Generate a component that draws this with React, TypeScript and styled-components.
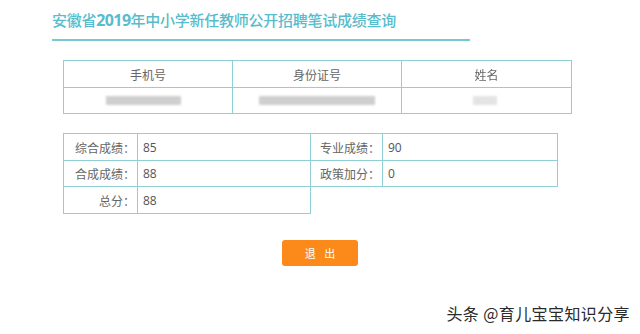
import styled, { createGlobalStyle } from 'styled-components';

const GlobalStyle = createGlobalStyle`
  html, body {
    margin: 0;
    padding: 0;
    background: #ffffff;
  }
  body {
    font-family: "Noto Sans CJK SC", "Noto Sans", sans-serif;
  }
`;

const BORDER = '#8fd0d6';

const scores = [
  { label: '综合成绩：', value: '85' },
  { label: '合成成绩：', value: '88' },
  { label: '总分：', value: '88' },
];

const extraScores = [
  { label: '专业成绩：', value: '90' },
  { label: '政策加分：', value: '0' },
];

const App = () => {
  return (
    <Page>
      <GlobalStyle />
      <Title>
        安徽省<Year>2019</Year>年中小学新任教师公开招聘笔试成绩查询
      </Title>
      <TitleLine />

      <Content>
        <InfoGrid>
          <HeadCell>手机号</HeadCell>
          <HeadCell>身份证号</HeadCell>
          <HeadCell $blur>姓名</HeadCell>
          <DataCell>
            <Masked $w={75} $shift={-10} />
          </DataCell>
          <DataCell>
            <Masked $w={116} $shift={0} />
          </DataCell>
          <DataCell>
            <Masked $w={24} $shift={-4} $light />
          </DataCell>
        </InfoGrid>

        <ScoreRow>
          <ScoreGrid $rows={3} $cols="73px 172px">
            {scores.map((s) => (
              <ScorePair key={s.label} label={s.label} value={s.value} />
            ))}
          </ScoreGrid>
          <ScoreGrid $rows={2} $cols="71px 174px" $joined>
            {extraScores.map((s) => (
              <ScorePair key={s.label} label={s.label} value={s.value} />
            ))}
          </ScoreGrid>
        </ScoreRow>

        <ButtonRow>
          <ExitButton>退 出</ExitButton>
        </ButtonRow>
      </Content>

      <Watermark>头条 @育儿宝宝知识分享</Watermark>
    </Page>
  );
};

const ScorePair = ({ label, value }: { label: string; value: string }) => (
  <>
    <LabelCell>{label}</LabelCell>
    <ValueCell>{value}</ValueCell>
  </>
);

export default App;

const Page = styled.main`
  position: relative;
  width: 640px;
  height: 334px;
  overflow: hidden;
  padding: 10px 0 0 52px;
  box-sizing: border-box;
`;

const Title = styled.h1`
  margin: 0;
  font-size: 15px;
  line-height: 20px;
  font-weight: 500;
  letter-spacing: -0.25px;
  color: #58bccc;
  white-space: nowrap;
`;

const Year = styled.span`
  font-family: "Open Sans", "Noto Sans", sans-serif;
  font-weight: 700;
  font-size: 16px;
  letter-spacing: -0.6px;
`;

const TitleLine = styled.div`
  width: 418px;
  height: 2px;
  margin-top: 9px;
  background: #74c9d3;
`;

const Content = styled.section`
  margin-left: 11px;
`;

const InfoGrid = styled.div`
  margin-top: 19px;
  width: 509px;
  box-sizing: border-box;
  display: grid;
  grid-template-columns: 168px 168px 169px;
  grid-template-rows: 26px 25px;
  gap: 1px;
  padding: 1px;
  background: ${BORDER};
`;

const HeadCell = styled.div<{ $blur?: boolean }>`
  background: #fff;
  display: flex;
  align-items: center;
  justify-content: center;
  font-size: 12px;
  color: #666;
  filter: ${(p) => (p.$blur ? 'blur(0.4px)' : 'none')};
`;

const DataCell = styled.div`
  background: #fff;
  display: flex;
  align-items: center;
  justify-content: center;
`;

const Masked = styled.span<{ $w: number; $shift: number; $light?: boolean }>`
  display: block;
  width: ${(p) => p.$w}px;
  height: 9px;
  margin-left: ${(p) => p.$shift}px;
  background: ${(p) => (p.$light ? '#e4e4e4' : '#cfcfcf')};
  filter: blur(1.2px);
`;

const ScoreRow = styled.div`
  margin-top: 19px;
  display: flex;
  align-items: flex-start;
`;

const ScoreGrid = styled.div<{ $rows: number; $cols: string; $joined?: boolean }>`
  display: grid;
  grid-template-columns: ${(p) => p.$cols};
  grid-template-rows: ${(p) => (p.$rows === 3 ? '26px 25px 26px' : '26px 25px')};
  gap: 1px;
  padding: 1px;
  margin-left: ${(p) => (p.$joined ? '-1px' : '0')};
  background: ${BORDER};
`;

const LabelCell = styled.div`
  background: #fff;
  display: flex;
  align-items: center;
  justify-content: flex-end;
  padding-right: 2px;
  font-size: 12px;
  color: #666;
`;

const ValueCell = styled.div`
  background: #fff;
  display: flex;
  align-items: center;
  padding-left: 5px;
  font-family: "Open Sans", "Noto Sans", sans-serif;
  font-size: 12px;
  color: #555;
`;

const ButtonRow = styled.div`
  margin-top: 26px;
  width: 509px;
  display: flex;
  padding-left: 219px;
  box-sizing: border-box;
`;

const ExitButton = styled.button`
  width: 76px;
  height: 26px;
  border: none;
  border-radius: 3px;
  background: #fb8a1a;
  color: #fff;
  font-family: "Noto Sans CJK SC", sans-serif;
  font-size: 11px;
  letter-spacing: 3px;
  padding: 0 0 0 3px;
  cursor: pointer;
`;

const Watermark = styled.div`
  position: absolute;
  right: 10px;
  bottom: 10px;
  font-size: 16px;
  line-height: 22px;
  color: #2a2a2a;
  letter-spacing: 0.4px;
  text-shadow: 0 0 2px #fff, 0 0 2px #fff;
`;
